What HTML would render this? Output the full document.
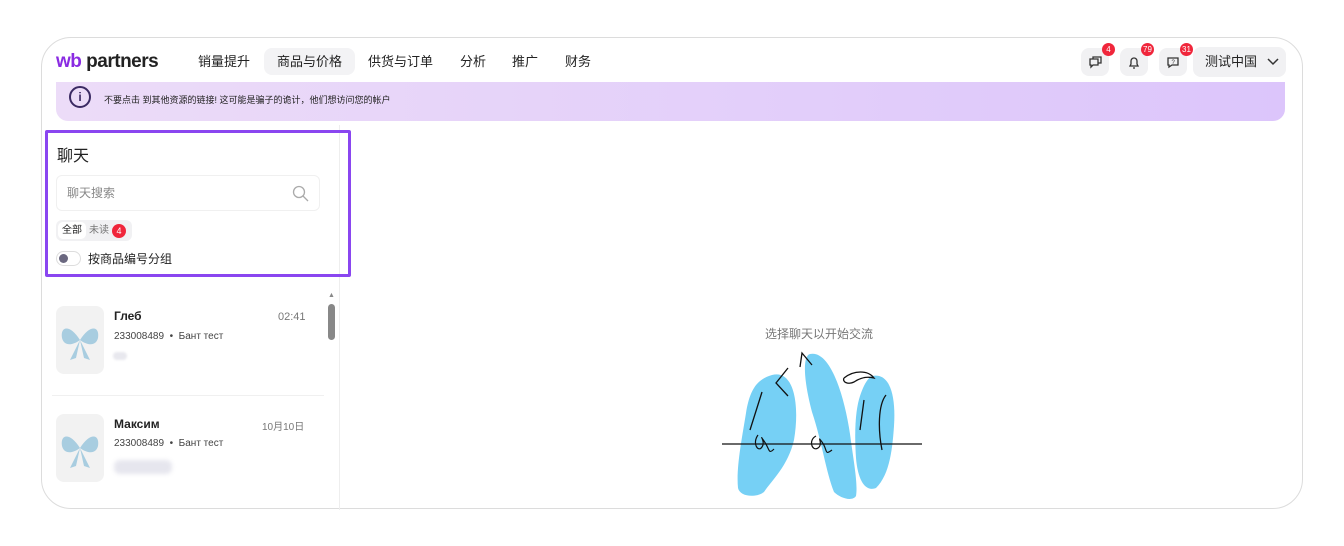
<!DOCTYPE html>
<html><head><meta charset="utf-8"><style>
*{box-sizing:border-box;margin:0;padding:0}
body{width:1344px;height:546px;background:#fff;font-family:"Liberation Sans","Noto Sans CJK SC",sans-serif;position:relative;overflow:hidden;color:#222}
.frame{position:absolute;left:41px;top:37px;width:1262px;height:472px;border:1.5px solid #dcdcdc;border-radius:30px;overflow:hidden;background:#fff}
.a{position:absolute}
.nav{font-size:13px;color:#222;top:48px;height:27px;line-height:19px;padding:4px 0}
.ib{position:absolute;top:48px;width:28px;height:28px;background:#f1f1f3;border-radius:8px}
.bd{position:absolute;top:-5px;right:-6px;background:#f0263b;color:#fff;font-size:8px;height:13px;min-width:13px;border-radius:7px;text-align:center;line-height:13px;padding:0 2px}
.bow{position:absolute;width:48px;height:68px;background:#f2f2f2;border-radius:8px}
</style></head><body>
<div class="frame"></div>
<div class="a" style="left:56px;top:51px;font-size:19px;font-weight:bold;letter-spacing:-0.5px"><span style="color:#8a2be2">wb</span> <span style="color:#222">partners</span></div>
<div class="a nav" style="left:198px">销量提升</div>
<div class="a nav" style="left:264px;background:#f3f3f5;border-radius:8px;padding:4px 13px">商品与价格</div>
<div class="a nav" style="left:368px">供货与订单</div>
<div class="a nav" style="left:460px">分析</div>
<div class="a nav" style="left:512px">推广</div>
<div class="a nav" style="left:565px">财务</div>
<div class="ib" style="left:1081px"><svg width="28" height="28"><path d="M9 11h8v6h-5l-2 2v-2H9z M12 11V9h8v6h-3" fill="none" stroke="#333" stroke-width="1.3"/></svg><div class="bd">4</div></div>
<div class="ib" style="left:1120px"><svg width="28" height="28"><path d="M10 18h8l-1-2v-3a3 3 0 0 0-6 0v3z M13 20h2" fill="none" stroke="#333" stroke-width="1.3"/></svg><div class="bd">79</div></div>
<div class="ib" style="left:1159px"><svg width="28" height="28"><path d="M9 10h10v7h-6l-3 2v-2H9z" fill="none" stroke="#333" stroke-width="1.3"/><text x="12.5" y="16" font-size="6" fill="#333">?</text></svg><div class="bd">31</div></div>
<div class="a" style="left:1193px;top:47px;width:93px;height:30px;background:#f1f1f3;border-radius:8px;font-size:13px;line-height:30px;padding-left:12px">测试中国 <svg width="12" height="8" style="margin-left:6px"><path d="M1 1l5 5 5-5" fill="none" stroke="#333" stroke-width="1.5"/></svg></div>
<div class="a" style="left:56px;top:82px;width:1229px;height:39px;background:linear-gradient(90deg,#ecdcf8,#dcc5fb);border-radius:0 0 12px 12px"></div>
<div class="a" style="left:69px;top:86px;width:22px;height:22px;border:2px solid #3b2a63;border-radius:50%;font-size:12px;font-weight:bold;text-align:center;line-height:18px;color:#3b2a63">i</div>
<div class="a" style="left:104px;top:93px;font-size:9px;color:#222">不要点击 到其他资源的链接! 这可能是骗子的诡计，他们想访问您的帐户</div>
<div class="a" style="left:339px;top:125px;width:1px;height:385px;background:#eee"></div>
<div class="a" style="left:45px;top:130px;width:306px;height:147px;border:3px solid #8a46f0;border-radius:2px"></div>
<div class="a" style="left:57px;top:142px;font-size:16px">聊天</div>
<div class="a" style="left:56px;top:175px;width:264px;height:36px;border:1px solid #f0f0f0;border-radius:6px;font-size:12px;color:#888;line-height:34px;padding-left:10px">聊天搜索<svg class="a" style="left:235px;top:9px" width="18" height="18"><circle cx="7" cy="7" r="5.5" fill="none" stroke="#aaa" stroke-width="1.3"/><path d="M11 11l5 5" stroke="#aaa" stroke-width="1.3"/></svg></div>
<div class="a" style="left:56px;top:220px;width:76px;height:21px;background:#f1f1f3;border-radius:6px"></div>
<div class="a" style="left:58px;top:222px;width:28px;height:17px;background:#fff;border-radius:5px;font-size:10px;line-height:17px;text-align:center">全部</div>
<div class="a" style="left:89px;top:222px;font-size:10px;line-height:17px;color:#777">未读</div>
<div class="a" style="left:112px;top:224px;width:14px;height:14px;border-radius:7px;background:#f0263b;color:#fff;font-size:9px;text-align:center;line-height:14px">4</div>
<div class="a" style="left:56px;top:251px;width:25px;height:15px;border:1px solid #ddd;border-radius:8px"><div class="a" style="left:2px;top:2px;width:9px;height:9px;border-radius:50%;background:#6b6880"></div></div>
<div class="a" style="left:88px;top:250px;font-size:12px">按商品编号分组</div>
<div class="a" style="left:328px;top:292px;font-size:7px;color:#888">▲</div>
<div class="a" style="left:328px;top:304px;width:7px;height:36px;background:#888;border-radius:4px"></div>
<div class="bow" style="left:56px;top:306px"></div>
<div class="bow" style="left:56px;top:414px"></div>
<svg class="a" style="left:56px;top:318px" width="48" height="46"><path d="M24 22C14 6 4 8 6 20c2 8 10 8 18 2zM24 22c10-16 20-14 18-2-2 8-10 8-18 2zM24 22l-10 20 6-2zM24 22l10 20-6-2z" fill="#a8cde0"/></svg>
<svg class="a" style="left:56px;top:426px" width="48" height="46"><path d="M24 22C14 6 4 8 6 20c2 8 10 8 18 2zM24 22c10-16 20-14 18-2-2 8-10 8-18 2zM24 22l-10 20 6-2zM24 22l10 20-6-2z" fill="#a8cde0"/></svg>
<div class="a" style="left:114px;top:309px;font-size:12px;font-weight:bold">Глеб</div>
<div class="a" style="left:278px;top:311px;font-size:11px;color:#777">02:41</div>
<div class="a" style="left:114px;top:331px;font-size:10px;color:#444">233008489 &nbsp;•&nbsp; Бант тест</div>
<div class="a" style="left:113px;top:352px;width:14px;height:8px;background:#e8e8ee;border-radius:4px;filter:blur(1px)"></div>
<div class="a" style="left:52px;top:395px;width:272px;height:1px;background:#f0f0f0"></div>
<div class="a" style="left:114px;top:417px;font-size:12px;font-weight:bold">Максим</div>
<div class="a" style="left:262px;top:418px;font-size:10px;color:#777">10月10日</div>
<div class="a" style="left:114px;top:438px;font-size:10px;color:#444">233008489 &nbsp;•&nbsp; Бант тест</div>
<div class="a" style="left:114px;top:460px;width:58px;height:14px;background:#e6e6ee;border-radius:6px;filter:blur(2px)"></div>
<div class="a" style="left:765px;top:325px;font-size:12px;color:#777">选择聊天以开始交流</div>
<svg class="a" style="left:700px;top:340px" width="240" height="170">
<path d="M72 35c22-6 28 30 22 65-6 26-22 40-30 52-8 6-24 5-26-4-2-20 4-50 8-75 4-25 12-34 26-38z" fill="#76d0f5"/>
<path d="M110 14c20-4 34 40 40 80 4 30 8 50 6 62-4 6-16 2-22-4-8-20-12-50-22-80-8-30-10-56-2-58z" fill="#76d0f5"/>
<path d="M172 36c18-4 24 20 22 50-2 30-6 50-18 62-10 4-18-6-20-30-2-30 0-50 4-62 4-12 8-18 12-20z" fill="#76d0f5"/>
<path d="M22 104h200" stroke="#111" stroke-width="1.3"/>
<path d="M88 28l-12 15 12 13M100 27l2-14 10 12M144 38c10-8 24-8 30 0-8-2-14 0-20 4-6 3-12 0-10-4M62 52l-12 38M164 60l-4 30M186 55c-8 10-8 35-4 55" fill="none" stroke="#111" stroke-width="1.3"/>
<path d="M58 95c-6 8 0 18 4 12s-4-14 2-6 4 14 10 8M116 96c-8 4-4 16 2 12s-2-14 4-6 2 14 10 8" fill="none" stroke="#111" stroke-width="1.2"/>
</svg>
</body></html>
